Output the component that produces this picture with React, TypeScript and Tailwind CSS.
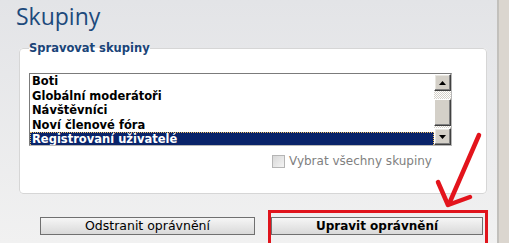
import React from 'react';

const groups = ['Boti', 'Globální moderátoři', 'Návštěvníci', 'Noví členové fóra', 'Registrovaní uživatelé'];

function ScrollButton({up}: {up: boolean}) {
    return (
        <div className="flex h-[17px] w-[17px] items-center justify-center border border-t-white border-l-white border-r-[#404040] border-b-[#404040] bg-[#d4d0c8] shadow-[inset_-1px_-1px_0_#808080,inset_1px_1px_0_#e8e6e0]">
            <svg width="7" height="4" viewBox="0 0 7 4">
                {up ? <path d="M3.5 0 L7 4 L0 4 Z" fill="#000"/> : <path d="M0 0 L7 0 L3.5 4 Z" fill="#000"/>}
            </svg>
        </div>
    );
}

export default function App() {
    const ui = {fontFamily: '"DejaVu Sans", Verdana, sans-serif'};

    return (
        <div className="flex h-[243px] w-[509px] overflow-hidden" style={ui}>
            <div className="relative w-[497px] shrink-0 bg-gradient-to-b from-[#e3e4e7] to-[#f1f1f1]">
                <h1
                    className="pl-[16px] pt-[1px] text-[23px] leading-[31px] text-[#1d4a7c]"
                    style={{fontFamily: '"Open Sans", "Noto Sans", sans-serif'}}
                >Skupiny</h1>

                <fieldset className="ml-[19px] mt-[9px] w-[468px] rounded-[4px] border border-[#d6d6d6] bg-white px-[9px] pb-[25px]">
                    <legend className="text-[11.5px] font-bold leading-[14px] text-[#1a4478]">Spravovat skupiny</legend>

                    <div className="mt-[18px] flex h-[73px] w-[423px] border border-t-[#7b7b7b] border-l-[#7b7b7b] border-r-[#b8b8b8] border-b-[#b8b8b8] bg-white">
                        <ul className="flex-1 overflow-hidden">
                            {groups.map((g, i) => (
                                <li
                                    key={g}
                                    className={i === groups.length - 1
                                        ? 'h-[14.5px] pl-[2px] text-[11.5px] font-bold leading-[14px] text-white bg-[#0a246a] outline-1 outline-dotted outline-[#f0c060] -outline-offset-1'
                                        : 'h-[14.5px] pl-[2px] text-[11.5px] font-bold leading-[14px] text-black'}
                                >{g}</li>
                            ))}
                        </ul>
                        <div className="flex w-[17px] flex-col">
                            <ScrollButton up={true}/>
                            <div className="h-[8px] bg-[repeating-conic-gradient(#d4d0c8_0_25%,#ffffff_0_50%)] bg-[length:2px_2px]"/>
                            <div className="h-[27px] border border-t-white border-l-white border-r-[#404040] border-b-[#404040] bg-[#d4d0c8] shadow-[inset_-1px_-1px_0_#808080]"/>
                            <div className="h-[2px] bg-[repeating-conic-gradient(#d4d0c8_0_25%,#ffffff_0_50%)] bg-[length:2px_2px]"/>
                            <ScrollButton up={false}/>
                        </div>
                    </div>

                    <label className="mt-[8px] flex items-center gap-[4px] pl-[243px] text-[12px] leading-[14px] text-[#808080]">
                        <span className="h-[13px] w-[13px] border border-[#b5b5b5] bg-gradient-to-br from-[#d8d8d8] to-[#f4f4f4]"/>
                        <span>Vybrat všechny skupiny</span>
                    </label>
                </fieldset>

                <div className="mt-[16px] flex items-start">
                    <button className="ml-[40px] mt-[7px] h-[18px] w-[215px] border border-[#707070] bg-gradient-to-b from-[#f6f6f6] to-[#d9d9d9] text-[12.5px] leading-[16px] text-black">
                        Odstranit oprávnění
                    </button>
                    <div className="ml-[13px] border-[3px] border-[#e0141c] pb-[12px] pr-[2px] pt-[4px]">
                        <button className="block h-[18px] w-[212px] border border-[#707070] bg-gradient-to-b from-[#f6f6f6] to-[#d9d9d9] text-[12px] font-bold leading-[16px] text-black">
                            Upravit oprávnění
                        </button>
                    </div>
                </div>

                <svg className="absolute left-0 top-0" width="497" height="243" viewBox="0 0 497 243">
                    <g stroke="#e3141c" strokeWidth="4.5" strokeLinecap="round" strokeLinejoin="round" fill="none">
                        <path d="M479 135 L449 204"/>
                        <path d="M438 182 L448 205 L470 197"/>
                    </g>
                </svg>
            </div>
            <div className="w-[2px] shrink-0 bg-[#c2c0bc]"/>
            <div className="flex-1 bg-[#dbd6cf]"/>
        </div>
    );
}
